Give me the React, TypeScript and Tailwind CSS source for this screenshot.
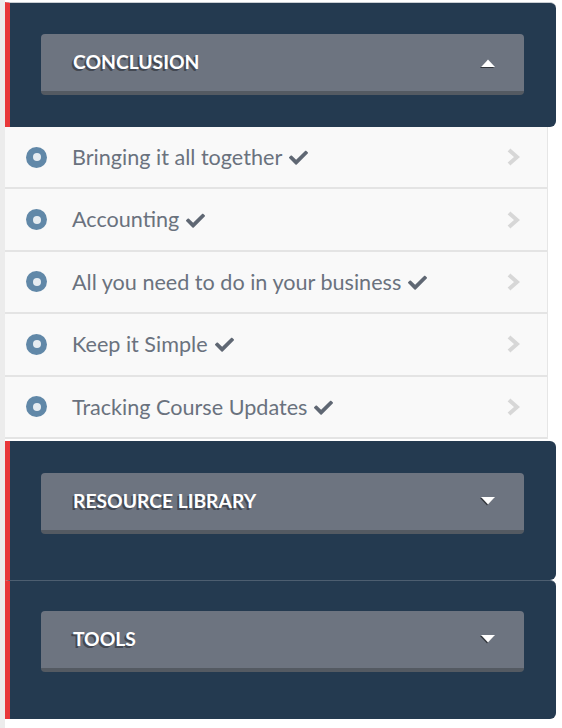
import React from 'react';

const lessons = [
  'Bringing it all together',
  'Accounting',
  'All you need to do in your business',
  'Keep it Simple',
  'Tracking Course Updates',
];

const Caret = ({ up }: { up?: boolean }) => (
  <svg width="16" height="10" viewBox="0 0 16 10" className="drop-shadow-[-1px_1px_0_rgba(0,0,0,0.55)]">
    {up ? <path d="M1 9 L8 1.5 L15 9 Z" fill="#fff" /> : <path d="M1 1 L8 8.5 L15 1 Z" fill="#fff" />}
  </svg>
);

const Check = () => (
  <svg width="19" height="15" viewBox="0 0 512 400" className="ml-[7px] mt-[1px]">
    <path d="M173.9 389.8L7.5 223.4c-10-10-10-26.2 0-36.2l36.2-36.2c10-10 26.2-10 36.2 0L192 263.1 432.1 23c10-10 26.2-10 36.2 0l36.2 36.2c10 10 10 26.2 0 36.2L210.1 389.8c-10 10-26.2 10-36.2 0z" fill="#5f6773" />
  </svg>
);

const Chevron = () => (
  <svg width="14" height="18" viewBox="0 0 14 18">
    <path d="M3 2 L11 9 L3 16" stroke="#d7d7d7" strokeWidth="4" fill="none" />
  </svg>
);

const SectionButton = ({ title, open }: { title: string; open?: boolean }) => (
  <div className="flex h-[61px] items-center justify-between rounded-[4px] border-b-[4px] border-[#545a62] bg-[#6d7480] pl-[32px] pr-[28px]">
    <span className="text-[19.3px] font-bold text-white [text-shadow:-2px_2px_0_rgba(30,35,42,0.55)]">{title}</span>
    <Caret up={open} />
  </div>
);

export default function App() {
  return (
    <div className="min-h-screen bg-white font-['Lato',sans-serif]">
      <div className="min-h-screen w-[556px] border-l-[5px] border-[#ececec] pt-[2px]">
        <div className="rounded-r-[6px] border-t border-[#c9ced3] border-l-[5px] border-l-[#e8383a] bg-[#243a50] pb-[32px] pl-[31px] pr-[32px] pt-[31px]">
          <SectionButton title="CONCLUSION" open />
        </div>

        <div className="w-[542px] shadow-[1px_0_0_#e6e6e6]">
          {lessons.map((l) => (
            <div key={l} className="flex h-[62.4px] items-center border-b-2 border-[#e4e4e4] bg-[#f9f9f9] pl-[21px] pr-[27px]">
              <div className="flex h-[21px] w-[21px] items-center justify-center rounded-full bg-[#6188a8]">
                <div className="h-[8px] w-[8px] rounded-full bg-[#e6ecf1]" />
              </div>
              <span className="ml-[25px] text-[21.6px] text-[#6a727e]">{l}</span>
              <Check />
              <div className="flex-1" />
              <Chevron />
            </div>
          ))}
        </div>

        <div className="mt-[2px] rounded-r-[6px] border-l-[5px] border-l-[#e8383a] bg-[#243a50] pb-[46px] pl-[31px] pr-[32px] pt-[32px]">
          <SectionButton title="RESOURCE LIBRARY" />
        </div>
        <div className="rounded-r-[6px] border-t border-[#4d5e70] border-l-[5px] border-l-[#e8383a] bg-[#243a50] pb-[47px] pl-[31px] pr-[32px] pt-[30px]">
          <SectionButton title="TOOLS" />
        </div>
      </div>
    </div>
  );
}
